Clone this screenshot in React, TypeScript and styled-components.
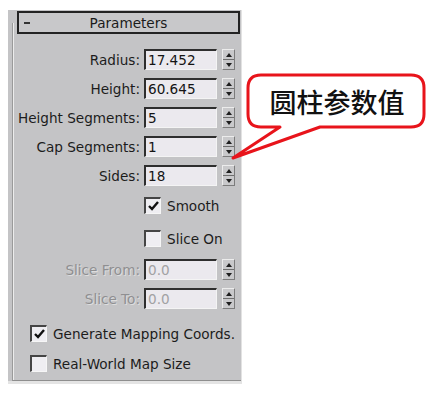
import React from "react";
import styled, { createGlobalStyle, css } from "styled-components";

const GlobalStyle = createGlobalStyle`
  html, body {
    margin: 0;
    padding: 0;
    background: #ffffff;
  }
  body {
    font-family: "DejaVu Sans", "Liberation Sans", sans-serif;
  }
`;

const Page = styled.div`
  position: relative;
  width: 446px;
  height: 394px;
  padding: 10px 0 0 8px;
  box-sizing: border-box;
`;

const Panel = styled.div`
  width: 234px;
  height: 374px;
  box-sizing: border-box;
  background: #c4c4c6;
  border-right: 1px solid #e2e2e2;
  border-bottom: 3px solid #e4e4e4;
  display: flex;
  flex-direction: column;
  position: relative;
`;

const Frame = styled.div`
  flex: 1;
  margin-left: 4px;
  margin-top: 13px;
  border-left: 1px solid #9a9a9a;
  box-shadow: inset 1px 0 0 #ececec;
  border-bottom: 1px solid #8e8e8e;
  display: flex;
  flex-direction: column;
`;

const Header = styled.div`
  margin: -12px 0 0 4px;
  width: 223px;
  height: 23px;
  box-sizing: border-box;
  border: 2px solid #232323;
  background: #c8c8ca;
  display: flex;
  align-items: center;
  justify-content: center;
  position: relative;
  font-size: 13.6px;
  color: #1b1b1b;
`;

const Collapse = styled.span`
  position: absolute;
  left: 5px;
  top: 9px;
  width: 6px;
  height: 2px;
  background: #333;
`;

const Fields = styled.div`
  display: flex;
  flex-direction: column;
  gap: 8px;
  margin-top: 15px;
`;

const Row = styled.div<{ $top?: number }>`
  display: flex;
  align-items: center;
  height: 21px;
  margin-top: ${(p) => p.$top ?? 0}px;
`;

const Label = styled.span<{ $disabled?: boolean }>`
  width: 127px;
  margin-right: 4px;
  text-align: right;
  font-size: 13.6px;
  white-space: nowrap;
  color: ${(p) => (p.$disabled ? "#8f8f91" : "#1c1c1c")};
  ${(p) =>
    p.$disabled &&
    css`
      text-shadow: 1px 1px 0 #dedede;
    `}
`;

const Input = styled.div<{ $disabled?: boolean }>`
  width: 73px;
  height: 21px;
  box-sizing: border-box;
  background: #ebe9ee;
  border-top: 2px solid #2e2e2e;
  border-left: 2px solid #2e2e2e;
  border-right: 1px solid #f4f4f4;
  border-bottom: 1px solid #f4f4f4;
  padding-left: 2px;
  font-size: 13.6px;
  line-height: 18px;
  color: ${(p) => (p.$disabled ? "#a2a2a4" : "#141414")};
`;

const Spinner = styled.div`
  width: 13px;
  height: 21px;
  margin-left: 5px;
  box-sizing: border-box;
  background: #c9c9cb;
  border-top: 1px solid #ececec;
  border-left: 1px solid #ececec;
  border-right: 1px solid #7c7c7c;
  border-bottom: 1px solid #7c7c7c;
  display: flex;
  flex-direction: column;
`;

const SpinHalf = styled.div<{ $down?: boolean }>`
  flex: 1;
  display: flex;
  align-items: center;
  justify-content: center;
  ${(p) =>
    p.$down &&
    css`
      border-top: 1px solid #6e6e6e;
    `}

  &::after {
    content: "";
    width: 0;
    height: 0;
    border-left: 3px solid transparent;
    border-right: 3px solid transparent;
    ${(p) =>
      p.$down
        ? css`
            border-top: 4px solid #1e1e1e;
          `
        : css`
            border-bottom: 4px solid #1e1e1e;
          `}
  }
`;

const CheckRow = styled.div<{ $left: number; $top: number }>`
  display: flex;
  align-items: center;
  gap: 6px;
  margin-left: ${(p) => p.$left}px;
  margin-top: ${(p) => p.$top}px;
  height: 17px;
  font-size: 13.6px;
  color: #1c1c1c;
  white-space: nowrap;
`;

const Box = styled.span`
  width: 17px;
  height: 17px;
  box-sizing: border-box;
  background: #efeef2;
  border-top: 2px solid #454545;
  border-left: 2px solid #454545;
  border-right: 1px solid #f6f6f6;
  border-bottom: 1px solid #f6f6f6;
  display: flex;
  align-items: center;
  justify-content: center;
`;

const Callout = styled.div`
  position: absolute;
  left: 230px;
  top: 60px;
  width: 200px;
  height: 105px;
`;

const CalloutText = styled.div`
  position: absolute;
  left: 18px;
  top: 14px;
  width: 178px;
  height: 54px;
  display: flex;
  align-items: center;
  justify-content: center;
  font-family: "Noto Sans CJK SC", "Noto Sans", sans-serif;
  font-weight: 500;
  font-size: 27px;
  color: #111;
`;

const Check = () => (
  <svg width="11" height="10" viewBox="0 0 11 10">
    <path d="M1 5 L4 8 L10 1" fill="none" stroke="#111" strokeWidth="2.4" />
  </svg>
);

type Field = { label: string; value: string; disabled?: boolean };

const Spin = () => (
  <Spinner>
    <SpinHalf />
    <SpinHalf $down />
  </Spinner>
);

const FieldRow = ({ label, value, disabled, top }: Field & { top?: number }) => (
  <Row $top={top}>
    <Label $disabled={disabled}>{label}</Label>
    <Input $disabled={disabled}>{value}</Input>
    <Spin />
  </Row>
);

const params: Field[] = [
  { label: "Radius:", value: "17.452" },
  { label: "Height:", value: "60.645" },
  { label: "Height Segments:", value: "5" },
  { label: "Cap Segments:", value: "1" },
  { label: "Sides:", value: "18" },
];

const App = () => {
  return (
    <Page>
      <GlobalStyle />
      <Panel>
        <Frame>
          <Header>
            <Collapse />
            Parameters
          </Header>
          <Fields>
            {params.map((f) => (
              <FieldRow key={f.label} {...f} />
            ))}
          </Fields>
          <CheckRow $left={131} $top={11}>
            <Box>
              <Check />
            </Box>
            Smooth
          </CheckRow>
          <CheckRow $left={131} $top={16}>
            <Box />
            Slice On
          </CheckRow>
          <FieldRow label="Slice From:" value="0.0" disabled top={12} />
          <FieldRow label="Slice To:" value="0.0" disabled top={8} />
          <CheckRow $left={17} $top={16}>
            <Box>
              <Check />
            </Box>
            Generate Mapping Coords.
          </CheckRow>
          <CheckRow $left={17} $top={13}>
            <Box />
            Real-World Map Size
          </CheckRow>
        </Frame>
      </Panel>
      <Callout>
        <svg width="200" height="105" viewBox="0 0 200 105">
          <path
            d="M31 15 H181 Q194 15 194 28 V54 Q194 67 181 67 H90 L3 98 L50 67 H31 Q18 67 18 54 V28 Q18 15 31 15 Z"
            fill="#ffffff"
            stroke="#e8141b"
            strokeWidth="3"
            strokeLinejoin="round"
          />
        </svg>
        <CalloutText>圆柱参数值</CalloutText>
      </Callout>
    </Page>
  );
};

export default App;
